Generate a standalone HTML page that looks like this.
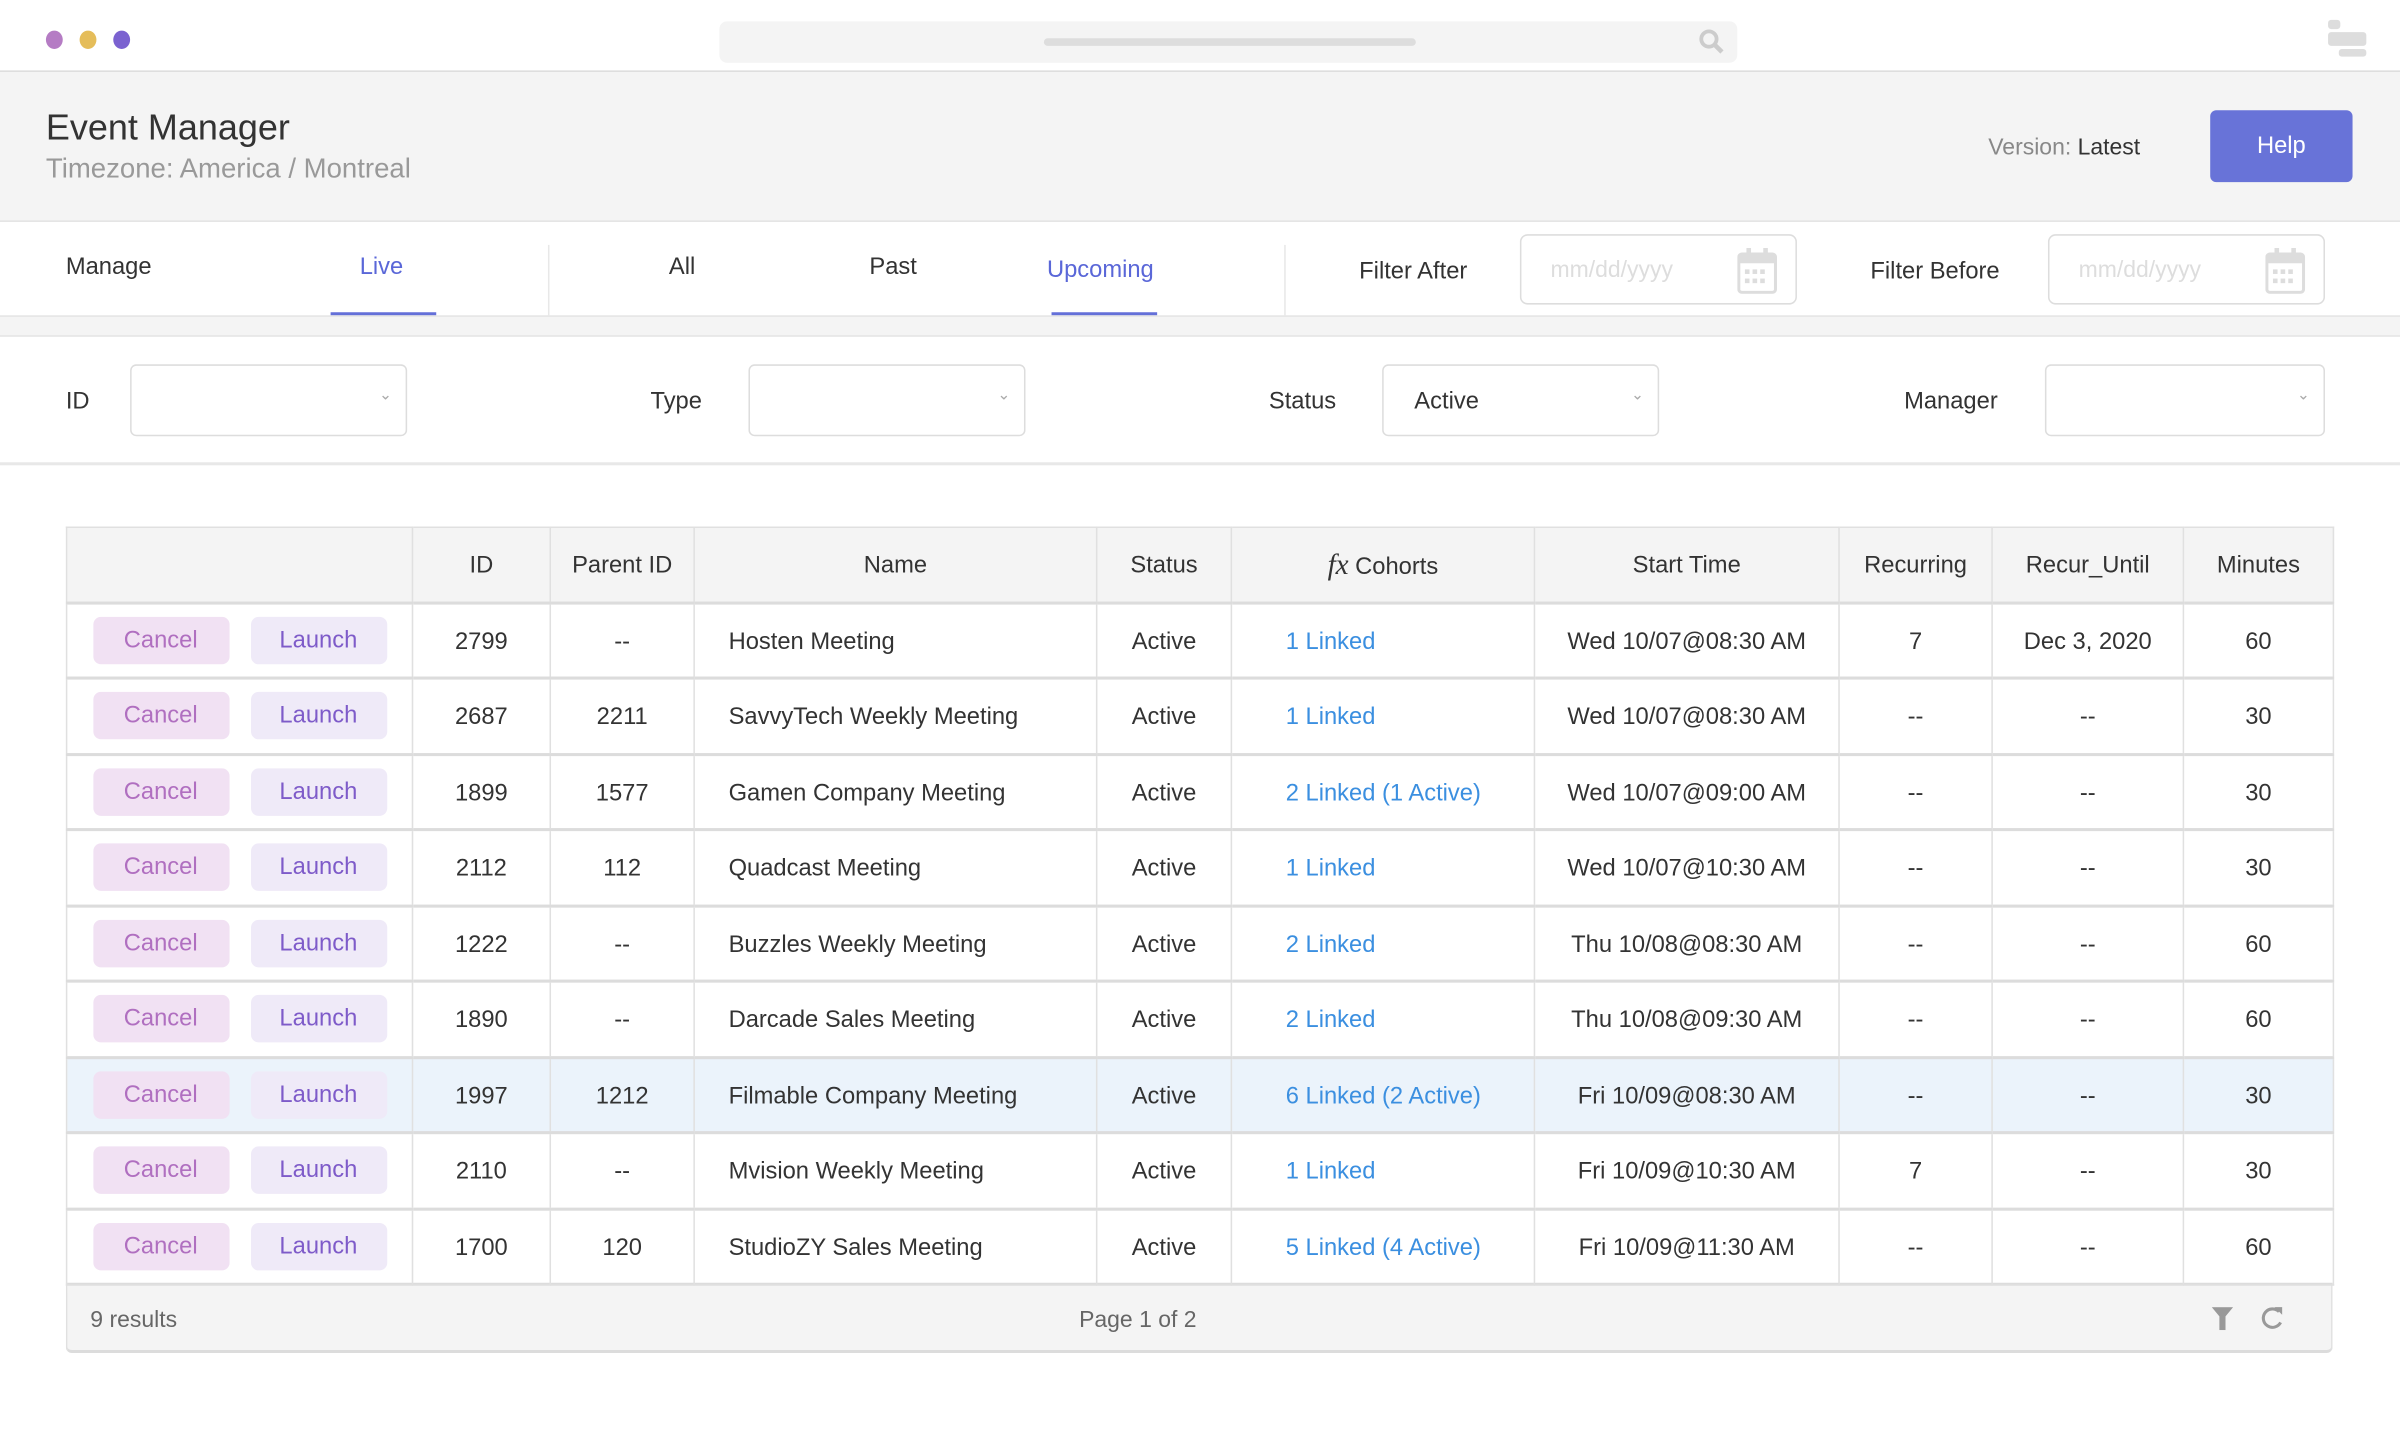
<!DOCTYPE html>
<html><head><meta charset="utf-8"><style>
*{margin:0;padding:0;box-sizing:border-box}
html,body{width:2400px;height:1440px;overflow:hidden;background:#fff}
#w{position:absolute;left:0;top:0;width:1568px;height:941px;transform:scale(1.530612);transform-origin:0 0;font-family:"Liberation Sans",sans-serif;color:#333}
.a{position:absolute}
.dot{position:absolute;top:20px;width:11px;height:12px;border-radius:50%}
.lbl{position:absolute;font-size:15.5px;color:#333;transform:translateY(-45%)}
.sel{position:absolute;border:1.5px solid #ddd;border-radius:4px;background:#fff}
.sel .car{position:absolute;right:9px;top:14px;font-size:10px;color:#aaa}
.date{position:absolute;border:1.5px solid #ddd;border-radius:5px;background:#fff;height:46px;width:181px;top:153px}
.date span{position:absolute;left:19px;top:14px;font-size:15px;color:#ddd}
.date svg{position:absolute;right:12px;top:8px}
table{position:absolute;left:43px;top:344px;width:1481px;border-collapse:collapse;table-layout:fixed;font-size:15.5px}
td,th{border:1px solid #e0e0e0;text-align:center;font-weight:normal;padding:0}
th{height:49px;background:#f4f4f4;color:#333;padding-top:3px}
td{height:49.5px;border-top:2px solid #dcdcdc;padding-top:3px}
td.n{text-align:left;padding-left:22px}
td.l{text-align:left;padding-left:35px;color:#3b8fe0}
.b{display:inline-block;width:89px;height:31px;line-height:31px;border-radius:5px;font-size:15.5px;vertical-align:middle;margin-top:-3px}
.c{background:#f1e1f3;color:#b06fc0;margin-right:14px}
.la{background:#efeaf8;color:#7e5bc9}
tr.h td{background:#ebf3fb}
</style></head><body><div id="w">
<div class="dot" style="left:30px;background:#b57cc4"></div>
<div class="dot" style="left:52px;background:#e5bd5a"></div>
<div class="dot" style="left:74px;background:#7b62d0"></div>
<div class="a" style="left:470px;top:14px;width:665px;height:27px;background:#f4f4f4;border-radius:5px"></div>
<div class="a" style="left:682px;top:25px;width:243px;height:5px;background:#ddd;border-radius:3px"></div>
<svg class="a" style="left:1109px;top:18px" width="18" height="18" viewBox="0 0 18 18"><circle cx="7.5" cy="7.5" r="5" stroke="#ccc" stroke-width="2.5" fill="none"/><path d="M11 11l5 5" stroke="#ccc" stroke-width="3"/></svg>
<div class="a" style="left:1521px;top:13px;width:8px;height:6px;background:#ddd;border-radius:2px"></div>
<div class="a" style="left:1521px;top:21px;width:25px;height:9px;background:#ddd;border-radius:2px"></div>
<div class="a" style="left:1528px;top:32px;width:18px;height:5px;background:#ddd;border-radius:2px"></div>
<div class="a" style="left:0;top:46px;width:1568px;height:99px;background:#f4f4f4;border-top:1.5px solid #ddd;border-bottom:1.5px solid #e4e4e4"></div>
<div class="a" style="left:30px;top:70px;font-size:23.5px;color:#333">Event Manager</div>
<div class="a" style="left:30px;top:100px;font-size:18px;color:#999">Timezone: America / Montreal</div>
<div class="a" style="left:1299px;top:88px;font-size:15px;color:#888">Version: <span style="color:#333">Latest</span></div>
<div class="a" style="left:1444px;top:72px;width:93px;height:47px;background:#6873d8;border-radius:4px;color:#fff;font-size:15.5px;text-align:center;line-height:47px">Help</div>
<div class="lbl" style="left:43px;top:174px">Manage</div>
<div class="lbl" style="left:235px;top:174px;color:#5a67d8">Live</div>
<div class="a" style="left:216px;top:204px;width:69px;height:3px;background:#6470d8"></div>
<div class="a" style="left:358px;top:160px;width:1px;height:46px;background:#e8e8e8"></div>
<div class="lbl" style="left:437px;top:174px">All</div>
<div class="lbl" style="left:568px;top:174px">Past</div>
<div class="lbl" style="left:684px;top:176px;color:#5a67d8">Upcoming</div>
<div class="a" style="left:687px;top:204px;width:69px;height:3px;background:#6470d8"></div>
<div class="a" style="left:839px;top:160px;width:1px;height:46px;background:#e8e8e8"></div>
<div class="lbl" style="left:888px;top:177px">Filter After</div>
<div class="date" style="left:993px"><span>mm/dd/yyyy</span><svg width="26" height="30" viewBox="0 0 26 30"><rect x="1" y="4" width="24" height="25" rx="2" fill="none" stroke="#ddd" stroke-width="2"/><rect x="1" y="4" width="24" height="6" fill="#ddd"/><rect x="6" y="0" width="3" height="7" fill="#ddd"/><rect x="17" y="0" width="3" height="7" fill="#ddd"/><g fill="#ddd"><rect x="5" y="14" width="3" height="3"/><rect x="10" y="14" width="3" height="3"/><rect x="15" y="14" width="3" height="3"/><rect x="5" y="20" width="3" height="3"/><rect x="10" y="20" width="3" height="3"/><rect x="15" y="20" width="3" height="3"/></g></svg></div>
<div class="lbl" style="left:1222px;top:177px">Filter Before</div>
<div class="date" style="left:1338px"><span>mm/dd/yyyy</span><svg width="26" height="30" viewBox="0 0 26 30"><rect x="1" y="4" width="24" height="25" rx="2" fill="none" stroke="#ddd" stroke-width="2"/><rect x="1" y="4" width="24" height="6" fill="#ddd"/><rect x="6" y="0" width="3" height="7" fill="#ddd"/><rect x="17" y="0" width="3" height="7" fill="#ddd"/><g fill="#ddd"><rect x="5" y="14" width="3" height="3"/><rect x="10" y="14" width="3" height="3"/><rect x="15" y="14" width="3" height="3"/><rect x="5" y="20" width="3" height="3"/><rect x="10" y="20" width="3" height="3"/><rect x="15" y="20" width="3" height="3"/></g></svg></div>
<div class="a" style="left:0;top:206px;width:1568px;height:14px;background:#f4f4f4;border-top:1.5px solid #e4e4e4;border-bottom:1.5px solid #e4e4e4"></div>
<div class="lbl" style="left:43px;top:262px">ID</div>
<div class="sel" style="left:85px;top:238px;width:181px;height:47px"><span class="car">&#8964;</span></div>
<div class="lbl" style="left:425px;top:262px">Type</div>
<div class="sel" style="left:489px;top:238px;width:181px;height:47px"><span class="car">&#8964;</span></div>
<div class="lbl" style="left:829px;top:262px">Status</div>
<div class="sel" style="left:903px;top:238px;width:181px;height:47px"><span style="position:absolute;left:20px;top:15px;font-size:15.5px">Active</span><span class="car">&#8964;</span></div>
<div class="lbl" style="left:1244px;top:262px">Manager</div>
<div class="sel" style="left:1336px;top:238px;width:183px;height:47px"><span class="car">&#8964;</span></div>
<div class="a" style="left:0;top:302px;width:1568px;height:1.5px;background:#e8e8e8"></div>
<div class="a" style="left:43px;top:838px;width:1481px;height:46px;background:#f4f4f4;border:1px solid #e0e0e0;border-top:2px solid #dcdcdc;border-bottom:2px solid #dcdcdc;border-radius:0 0 4px 4px"></div>
<div class="a" style="left:59px;top:854px;font-size:15px;color:#666">9 results</div>
<div class="a" style="left:705px;top:854px;font-size:15px;color:#666">Page 1 of 2</div>
<svg class="a" style="left:1445px;top:854px" width="14" height="15" viewBox="0 0 14 15"><path d="M0 0h14L9 6v9H5V6z" fill="#999"/></svg>
<svg class="a" style="left:1477px;top:853px" width="15" height="16" viewBox="0 0 15 16"><path d="M12 4A6 6 0 1 0 13 11" stroke="#999" stroke-width="2" fill="none"/><path d="M9 1l5 0 0 5z" fill="#999"/></svg>
<table>
<colgroup><col style="width:226px"><col style="width:90px"><col style="width:94px"><col style="width:263px"><col style="width:88px"><col style="width:198px"><col style="width:199px"><col style="width:100px"><col style="width:125px"><col style="width:98px"></colgroup>
<tr><th></th><th>ID</th><th>Parent ID</th><th>Name</th><th>Status</th><th><i style="font-family:'Liberation Serif',serif;font-size:19px">fx</i> Cohorts</th><th>Start Time</th><th>Recurring</th><th>Recur_Until</th><th>Minutes</th></tr>
<tr><td><span class="b c">Cancel</span><span class="b la">Launch</span></td><td>2799</td><td>--</td><td class="n">Hosten Meeting</td><td>Active</td><td class="l">1 Linked</td><td>Wed 10/07@08:30 AM</td><td>7</td><td>Dec 3, 2020</td><td>60</td></tr>
<tr><td><span class="b c">Cancel</span><span class="b la">Launch</span></td><td>2687</td><td>2211</td><td class="n">SavvyTech Weekly Meeting</td><td>Active</td><td class="l">1 Linked</td><td>Wed 10/07@08:30 AM</td><td>--</td><td>--</td><td>30</td></tr>
<tr><td><span class="b c">Cancel</span><span class="b la">Launch</span></td><td>1899</td><td>1577</td><td class="n">Gamen Company Meeting</td><td>Active</td><td class="l">2 Linked (1 Active)</td><td>Wed 10/07@09:00 AM</td><td>--</td><td>--</td><td>30</td></tr>
<tr><td><span class="b c">Cancel</span><span class="b la">Launch</span></td><td>2112</td><td>112</td><td class="n">Quadcast Meeting</td><td>Active</td><td class="l">1 Linked</td><td>Wed 10/07@10:30 AM</td><td>--</td><td>--</td><td>30</td></tr>
<tr><td><span class="b c">Cancel</span><span class="b la">Launch</span></td><td>1222</td><td>--</td><td class="n">Buzzles Weekly Meeting</td><td>Active</td><td class="l">2 Linked</td><td>Thu 10/08@08:30 AM</td><td>--</td><td>--</td><td>60</td></tr>
<tr><td><span class="b c">Cancel</span><span class="b la">Launch</span></td><td>1890</td><td>--</td><td class="n">Darcade Sales Meeting</td><td>Active</td><td class="l">2 Linked</td><td>Thu 10/08@09:30 AM</td><td>--</td><td>--</td><td>60</td></tr>
<tr class="h"><td><span class="b c">Cancel</span><span class="b la">Launch</span></td><td>1997</td><td>1212</td><td class="n">Filmable Company Meeting</td><td>Active</td><td class="l">6 Linked (2 Active)</td><td>Fri 10/09@08:30 AM</td><td>--</td><td>--</td><td>30</td></tr>
<tr><td><span class="b c">Cancel</span><span class="b la">Launch</span></td><td>2110</td><td>--</td><td class="n">Mvision Weekly Meeting</td><td>Active</td><td class="l">1 Linked</td><td>Fri 10/09@10:30 AM</td><td>7</td><td>--</td><td>30</td></tr>
<tr><td><span class="b c">Cancel</span><span class="b la">Launch</span></td><td>1700</td><td>120</td><td class="n">StudioZY Sales  Meeting</td><td>Active</td><td class="l">5 Linked (4 Active)</td><td>Fri 10/09@11:30 AM</td><td>--</td><td>--</td><td>60</td></tr>
</table>
</div></body></html>
